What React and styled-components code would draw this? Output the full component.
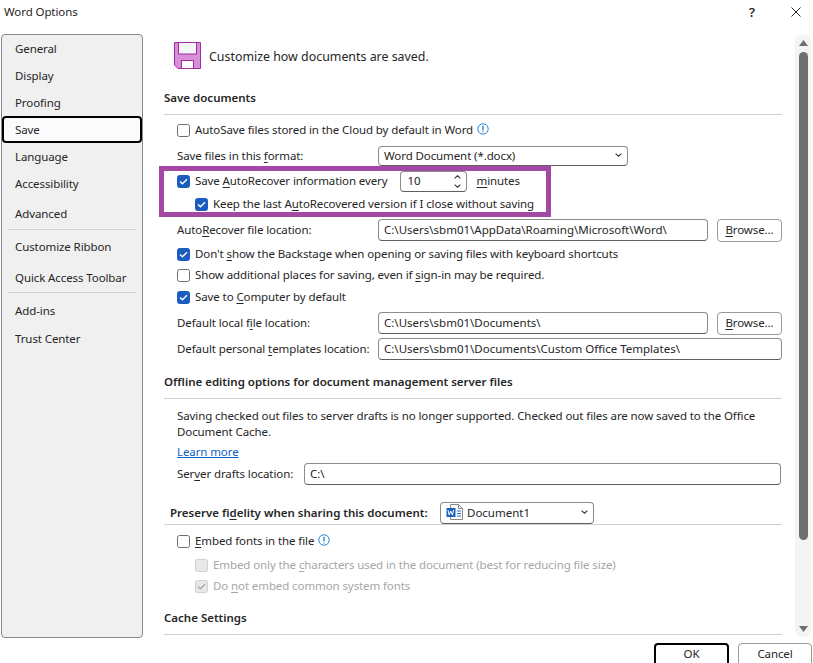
import React from "react";
import styled, { createGlobalStyle } from "styled-components";

const Global = createGlobalStyle`
  html, body { margin: 0; padding: 0; background: #fff; }
  body {
    font-family: "Noto Sans", "Open Sans", sans-serif;
    font-size: 11.5px;
    letter-spacing: -0.1px;
    color: #262626;
  }
  u { text-underline-offset: 2px; text-decoration-thickness: 1px; }
`;

const Dialog = styled.div`
  width: 813px;
  height: 663px;
  overflow: hidden;
  display: flex;
  flex-direction: column;
  background: #fff;
`;

const TitleBar = styled.div`
  height: 34px;
  flex: none;
  display: flex;
  align-items: center;
  padding: 0 12px 11px 4px;
  box-sizing: border-box;
`;
const Title = styled.div`
  flex: 1;
`;
const HelpMark = styled.span`
  font-size: 13px;
  font-weight: 600;
  margin-right: 36px;
`;

const Body = styled.div`
  flex: none;
  height: 604px;
  display: flex;
`;

const Sidebar = styled.nav`
  width: 142px;
  margin-left: 1px;
  box-sizing: border-box;
  background: #f0f0f0;
  border: 1px solid #8a8a8a;
  border-radius: 4px;
  flex: none;
`;
const NavItem = styled.div`
  height: ${(p) => p.$h || 27}px;
  padding: ${(p) => p.$pt || 0}px 0 1px 13px;
  display: flex;
  align-items: center;
  width: 140px;
  box-sizing: border-box;
  ${(p) => p.$active && `
    background: #fbfbfb;
    outline: 2px solid #000;
    outline-offset: -2px;
    border-radius: 4px;
  `}
`;
const NavRule = styled.div`
  height: 1px;
  background: #d0d0d0;
  margin: 0 6px;
`;

const Main = styled.main`
  width: 618px;
  margin-left: 21px;
  flex: none;
`;
const Hero = styled.div`
  display: flex;
  align-items: center;
  gap: 8px;
  padding: 8px 0 0 10px;
  height: 27px;
  font-size: 12.4px;
  letter-spacing: 0;
`;
const HeroText = styled.span`
  padding-top: 2px;
`;
const SectionHead = styled.div`
  height: ${(p) => p.$h}px;
  margin-top: ${(p) => p.$top || 0}px;
  padding: ${(p) => p.$pt || 0}px 0 2px;
  box-sizing: border-box;
  border-bottom: 1px solid #d0d0d0;
  display: flex;
  align-items: center;
  font-weight: 600;
  letter-spacing: 0;
  white-space: nowrap;
`;
const PreserveHead = styled(SectionHead)`
  padding: 0 0 0 6px;
`;
const PreserveLabel = styled.span`
  width: 270px;
  flex: none;
  margin-bottom: 2px;
`;
const Row = styled.div`
  height: ${(p) => p.$h}px;
  margin-top: ${(p) => p.$top || 0}px;
  padding-left: ${(p) => p.$indent || 13}px;
  display: flex;
  align-items: center;
  flex: none;
  white-space: nowrap;
  color: ${(p) => (p.$muted ? "#a6a6a6" : "inherit")};
`;
const Label = styled.span`
  margin-bottom: 2px;
`;
const Check = styled.span`
  width: 13px;
  height: 13px;
  box-sizing: border-box;
  border-radius: 2.5px;
  flex: none;
  margin-right: 5px;
  display: inline-flex;
  align-items: center;
  justify-content: center;
  background: ${(p) => (p.$muted ? "#e8e8e8" : p.$on ? "#1a5cc0" : "#fff")};
  border: 1px solid ${(p) => (p.$muted ? "#d0d0d0" : p.$on ? "#1a5cc0" : "#6e6e6e")};
`;
const FieldLabel = styled(Label)`
  width: ${(p) => p.$w || 201}px;
  flex: none;
`;
const Field = styled.div`
  width: ${(p) => p.$w}px;
  height: ${(p) => p.$fh || 22}px;
  box-sizing: border-box;
  border: 1px solid #8c8c8c;
  border-bottom-color: #5f5f5f;
  border-radius: 4px;
  padding: 0 5px 2px 5px;
  display: flex;
  align-items: center;
  flex: none;
  background: #fff;
  white-space: nowrap;
  overflow: hidden;
  font-weight: 400;
`;
const PathField = styled(Field)`
  letter-spacing: 0;
`;
const Spinner = styled(Field)`
  margin-left: 12px;
  padding-left: 7px;
`;
const Grow = styled.span`
  flex: 1;
`;
const DocName = styled(Grow)`
  margin-left: 4px;
`;
const BrowseButton = styled.div`
  width: 65px;
  height: 23px;
  margin-left: 9px;
  padding-bottom: 2px;
  box-sizing: border-box;
  border: 1px solid #9a9a9a;
  border-radius: 4px;
  display: flex;
  align-items: center;
  justify-content: center;
  flex: none;
`;
const Highlight = styled.div`
  width: 392px;
  height: 51px;
  margin-left: -5px;
  box-sizing: border-box;
  border: 5px solid #a349a4;
`;
const HighlightRow = styled(Row)`
  padding-left: ${(p) => p.$indent}px;
`;
const Unit = styled(Label)`
  margin-left: 10px;
`;
const Steppers = styled.span`
  display: flex;
  flex-direction: column;
  gap: 5px;
  margin-top: 2px;
`;
const Para = styled.p`
  margin: 9px 0 0 13px;
  line-height: 16px;
  width: 590px;
`;
const LearnMore = styled.a`
  color: #0f62c4;
  text-decoration: underline;
  margin-bottom: 2px;
`;
const InfoDot = styled.svg`
  margin: -3px 0 0 4px;
  flex: none;
`;

const ScrollBar = styled.div`
  width: 16px;
  height: 603px;
  margin-left: 13px;
  background: #f4f4f4;
  border-radius: 8px;
  flex: none;
  display: flex;
  flex-direction: column;
  align-items: center;
  padding: 6px 0 5px;
  box-sizing: border-box;
`;
const ScrollThumb = styled.div`
  width: 9px;
  height: 488px;
  background: #6f6f6f;
  border-radius: 5px;
  margin: 6px 0 auto;
`;

const Footer = styled.div`
  display: flex;
  justify-content: flex-end;
  gap: 9px;
  padding: 5px 1px 0 0;
`;
const DialogButton = styled.div`
  width: ${(p) => p.$w}px;
  height: 30px;
  box-sizing: border-box;
  border-radius: 4px;
  border: ${(p) => (p.$primary ? "2px solid #000" : "1px solid #9a9a9a")};
  text-align: center;
  line-height: ${(p) => (p.$primary ? 18 : 20)}px;
`;

const Tick = ({ color = "#fff" }) => (
  <svg width="9" height="7" viewBox="0 0 9 7">
    <path d="M1 3.6 3.4 5.8 8 1.2" fill="none" stroke={color} strokeWidth="1.4" />
  </svg>
);

const Box = ({ on, muted }) => (
  <Check $on={on} $muted={muted}>
    {on && <Tick color={muted ? "#a8a8a8" : "#fff"} />}
  </Check>
);

const Info = () => (
  <InfoDot width="12" height="12" viewBox="0 0 12 12">
    <circle cx="6" cy="6" r="5.2" fill="none" stroke="#2b88d8" strokeWidth="1" />
    <path d="M6 2.8v4.6" stroke="#2b88d8" strokeWidth="1.4" />
    <path d="M6 8.4v1" stroke="#2b88d8" strokeWidth="1.2" />
  </InfoDot>
);

const Chevron = () => (
  <svg width="7" height="4" viewBox="0 0 7 4">
    <path d="M.6.6 3.5 3.2 6.4.6" fill="none" stroke="#333" strokeWidth="1.1" />
  </svg>
);

const ChevronUp = () => (
  <svg width="7" height="4" viewBox="0 0 7 4">
    <path d="M.6 3.4 3.5.8 6.4 3.4" fill="none" stroke="#333" strokeWidth="1.1" />
  </svg>
);

const SaveIcon = () => (
  <svg width="27" height="27" viewBox="0 0 27 27">
    <path d="M.5.5h26v26H4L.5 23Z" fill="#d88fd8" stroke="#a02ba0" />
    <rect x="4.5" y=".5" width="18" height="11.5" fill="#f5f5f5" stroke="#a02ba0" />
    <rect x="7.5" y="18.5" width="12" height="8" fill="#fff" stroke="#a02ba0" />
  </svg>
);

const WordIcon = () => (
  <svg width="17" height="16" viewBox="0 0 17 16">
    <path d="M4.5.5h8l4 4v11h-12Z" fill="#fff" stroke="#8a8a8a" />
    <path d="M12.5.5v4h4" fill="none" stroke="#8a8a8a" />
    <rect x="0.5" y="4" width="9" height="9" fill="#1f5fbf" />
    <path d="M2 6l1.2 5L4.800 7l1.600 4L7.600 6" fill="none" stroke="#fff" strokeWidth="1" />
    <path d="M11 7h4M11 9.500h4M11 12h4" stroke="#2b6cc8" strokeWidth="1" />
  </svg>
);

const navItems = [
  { label: "General" },
  { label: "Display" },
  { label: "Proofing" },
  { label: "Save", active: true },
  { label: "Language" },
  { label: "Accessibility" },
  { label: "Advanced", h: 32, pt: 2 },
  { rule: true },
  { label: "Customize Ribbon", h: 34 },
  { label: "Quick Access Toolbar", h: 28 },
  { rule: true },
  { label: "Add-ins", h: 32, pt: 4 },
  { label: "Trust Center" },
];

export default function App() {
  return (
    <Dialog>
      <Global />
      <TitleBar>
        <Title>Word Options</Title>
        <HelpMark>?</HelpMark>
        <svg width="10" height="10" viewBox="0 0 10 10">
          <path d="M.5.5l9 9M9.500.5l-9 9" stroke="#222" strokeWidth="1" />
        </svg>
      </TitleBar>
      <Body>
        <Sidebar>
          {navItems.map((item, index) =>
            item.rule ? (
              <NavRule key={index} />
            ) : (
              <NavItem key={index} $active={item.active} $h={item.h} $pt={item.pt}>
                {item.label}
              </NavItem>
            )
          )}
        </Sidebar>
        <Main>
          <Hero>
            <SaveIcon />
            <HeroText>Customize how documents are saved.</HeroText>
          </Hero>
          <SectionHead $h={32} $top={14}>Save documents</SectionHead>
          <Row $h={31}>
            <Box />
            <Label>AutoSave files stored in the Cloud by default in Word</Label>
            <Info />
          </Row>
          <Row $h={20}>
            <FieldLabel>Save files in this <u>f</u>ormat:</FieldLabel>
            <Field $w={250} $fh={20}>
              <Grow>Word Document (*.docx)</Grow>
              <Chevron />
            </Field>
          </Row>
          <Highlight>
            <HighlightRow $h={21} $indent={13}>
              <Box on />
              <Label>Save <u>A</u>utoRecover information every</Label>
              <Spinner $w={67} $fh={21}>
                <Grow>10</Grow>
                <Steppers><ChevronUp /><Chevron /></Steppers>
              </Spinner>
              <Unit><u>m</u>inutes</Unit>
            </HighlightRow>
            <HighlightRow $h={24} $indent={31}>
              <Box on />
              <Label>Keep the last A<u>u</u>toRecovered version if I close without saving</Label>
            </HighlightRow>
          </Highlight>
          <Row $h={26}>
            <FieldLabel>Auto<u>R</u>ecover file location:</FieldLabel>
            <PathField $w={330}>C:\Users\sbm01\AppData\Roaming\Microsoft\Word\</PathField>
            <BrowseButton><span><u>B</u>rowse...</span></BrowseButton>
          </Row>
          <Row $h={22}>
            <Box on />
            <Label>Don't <u>s</u>how the Backstage when opening or saving files with keyboard shortcuts</Label>
          </Row>
          <Row $h={21}>
            <Box />
            <Label>Show additional places for saving, even if <u>s</u>ign-in may be required.</Label>
          </Row>
          <Row $h={22}>
            <Box on />
            <Label>Save to <u>C</u>omputer by default</Label>
          </Row>
          <Row $h={30}>
            <FieldLabel>Default local f<u>i</u>le location:</FieldLabel>
            <PathField $w={330}>C:\Users\sbm01\Documents\</PathField>
            <BrowseButton><span><u>B</u>rowse...</span></BrowseButton>
          </Row>
          <Row $h={22}>
            <FieldLabel>Default personal <u>t</u>emplates location:</FieldLabel>
            <PathField $w={404}>C:\Users\sbm01\Documents\Custom Office Templates\</PathField>
          </Row>
          <SectionHead $h={33} $top={6}>Offline editing options for document management server files</SectionHead>
          <Para>
            Saving checked out files to server drafts is no longer supported. Checked out files are now saved to the Office Document Cache.
          </Para>
          <Row $h={22} $top={1}>
            <LearnMore>Learn more</LearnMore>
          </Row>
          <Row $h={22}>
            <FieldLabel $w={127}>Ser<u>v</u>er drafts location:</FieldLabel>
            <PathField $w={477}>C:\</PathField>
          </Row>
          <PreserveHead $h={23} $top={17}>
            <PreserveLabel>Preserve fi<u>d</u>elity when sharing this document:</PreserveLabel>
            <Field $w={154} $fh={22}>
              <WordIcon />
              <DocName>Document1</DocName>
              <Chevron />
            </Field>
          </PreserveHead>
          <Row $h={33}>
            <Box />
            <Label><u>E</u>mbed fonts in the file</Label>
            <Info />
          </Row>
          <Row $h={15} $indent={31} $muted>
            <Box muted />
            <Label>Embed only the <u>c</u>haracters used in the document (best for reducing file size)</Label>
          </Row>
          <Row $h={26} $indent={31} $muted>
            <Box on muted />
            <Label>Do <u>n</u>ot embed common system fonts</Label>
          </Row>
          <SectionHead $h={36} $pt={4}>Cache Settings</SectionHead>
        </Main>
        <ScrollBar>
          <svg width="9" height="6" viewBox="0 0 9 6"><path d="M4.500 0 9 6H0Z" fill="#6f6f6f" /></svg>
          <ScrollThumb />
          <svg width="9" height="6" viewBox="0 0 9 6"><path d="M0 0h9L4.500 6Z" fill="#6f6f6f" /></svg>
        </ScrollBar>
      </Body>
      <Footer>
        <DialogButton $w={75} $primary>OK</DialogButton>
        <DialogButton $w={74}>Cancel</DialogButton>
      </Footer>
    </Dialog>
  );
}
